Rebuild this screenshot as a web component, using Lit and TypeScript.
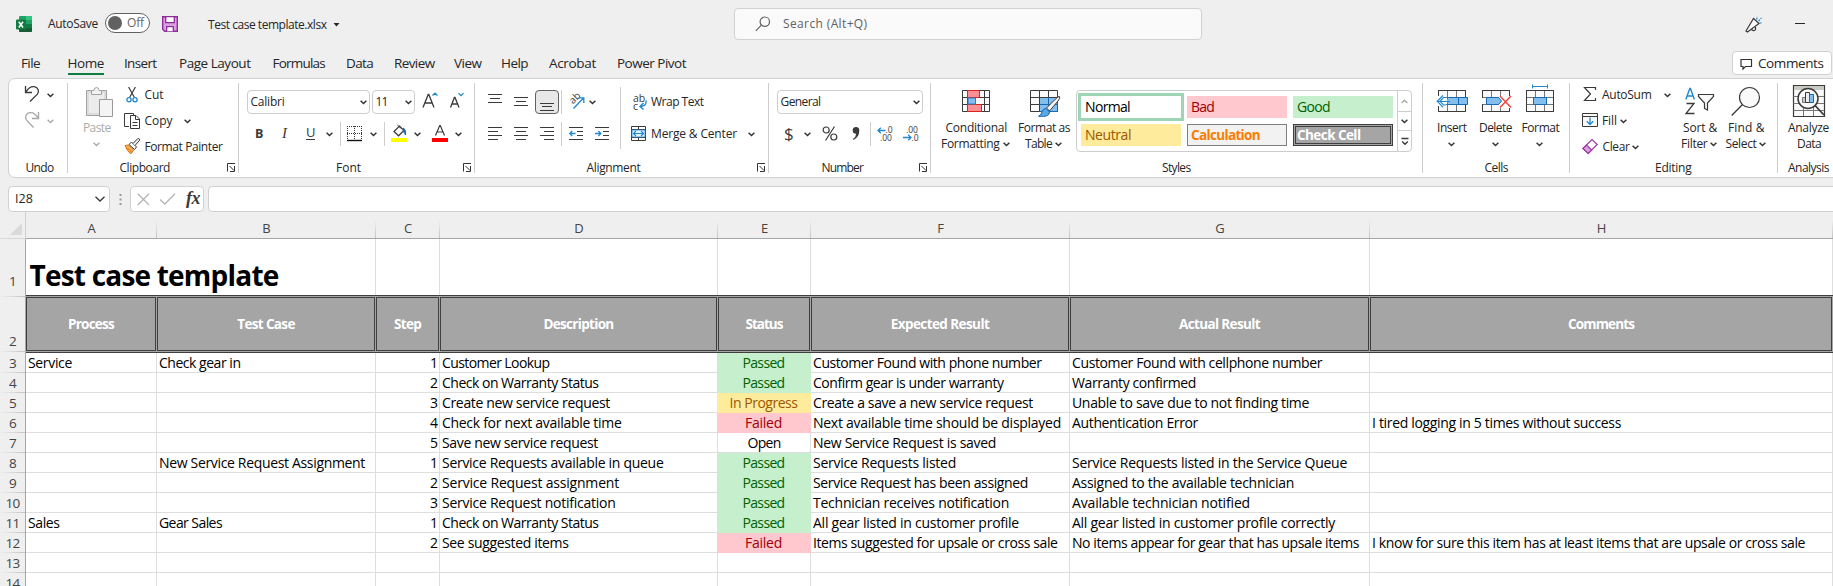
import { LitElement, html, css, svg, TemplateResult, SVGTemplateResult } from "lit";
import { customElement, property } from "lit/decorators.js";
import { classMap } from "lit/directives/class-map.js";
import { styleMap } from "lit/directives/style-map.js";

/** A single line of text tracked so that it fills a given width. */
@customElement("fit-text")
class FitText extends LitElement {
  @property() text = "";
  @property({ type: Number }) w = 0;
  static styles = css`
    :host { display: inline-block; white-space: pre; flex: none; }
    span { display: inline-block; }
  `;
  render() {
    return html`<span>${this.text}</span>`;
  }
  updated() {
    const s = this.renderRoot.querySelector("span") as HTMLElement;
    s.style.letterSpacing = "0";
    const natural = s.getBoundingClientRect().width;
    s.style.letterSpacing = (this.w - natural) / this.text.length + "px";
    this.style.width = this.w + "px";
  }
}

const t = (text: string, w: number, cls = "") =>
  html`<fit-text class=${cls} .text=${text} .w=${w}></fit-text>`;

const ic = (w: number, h: number, body: SVGTemplateResult | SVGTemplateResult[]) =>
  html`<svg class="ic" width=${w} height=${h} viewBox="0 0 ${w} ${h}" fill="none" stroke="#3b3a39">${body}</svg>`;

type Item = [number, TemplateResult];

/** A row of items, each starting at a distance from the row's left edge. */
const strip = (x0: number, cls: string, items: Item[]) =>
  html`<div class="strip ${cls}">
    ${items.map(
      ([x, tpl]) =>
        html`<div class="slot"><div class="slot-in" style=${styleMap({ marginLeft: x - x0 + "px" })}>${tpl}</div></div>`
    )}
  </div>`;

const chev = (c = "#333") =>
  html`<svg class="ic" width="7" height="5" viewBox="0 0 7 5" fill="none" stroke=${c} stroke-width="1.5"><path d="M.6 .8L3.5 3.5L6.4 .8"/></svg>`;
const launcher = () =>
  ic(9, 9, svg`<path d="M.5 8.5V.5H8M7.5 3V8.5H3M2.5 3L7 7.5" stroke="#333"/>`);
const vsep = (h: number) => html`<div class=${h > 30 ? "vsep tall" : "vsep"}></div>`;

/* horizontal rules of a paragraph glyph: [x1, x2, y] */
const rules = (w: number, h: number, ls: number[][]) =>
  ic(w, h, ls.map(([a, b, y]) => svg`<path d="M${a} ${y + 0.5}H${b}"/>`));

const undo = ic(17, 26, svg`<path d="M1.5 4V10.5H8" stroke-width="1.3"/><path d="M1.8 10.2C4 6.5 7 4.3 10.2 4.7C14 5.3 15.6 9 13.4 12.2L6 19.5" stroke-width="1.3"/>`);
const redo = ic(17, 26, svg`<g stroke="#a6a6a6" stroke-width="1.3"><path d="M14.5 4V10.5H8"/><path d="M14.2 10.2C12 6.5 9 4.3 5.8 4.7C2 5.3 .4 9 2.6 12.2L9.5 19.5"/></g>`);

const paste = ic(28, 38, svg`<g stroke="#a3a3a3"><path d="M.5 8.5H20.5V33.5H.5Z" fill="#dcdcdc"/><path d="M3 11H18V31H3Z" fill="#ececec" stroke="none"/><path d="M5.5 12.5V8.5H8Q8 5.5 10.5 5.5T13 8.5H15.5V12.5Z" fill="#f2f2f2"/><path d="M13.5 17.5H26.5V34.5H13.5Z" fill="#f4f4f4" stroke="#999"/></g>`);
const cut = ic(12, 26, svg`<path d="M2.6 5L8.3 15.3M9.4 5L3.7 15.3" stroke-width="1.2"/><circle cx="3" cy="17.8" r="2.1" stroke="#1e88d2" stroke-width="1.3"/><circle cx="9" cy="17.8" r="2.1" stroke="#1e88d2" stroke-width="1.3"/>`);
const copy = ic(17, 26, svg`<path d="M5 18.5H.5V5.5H9.5V7" /><path d="M6.5 7.5H12L15.5 11V20.5H6.5Z" fill="#fff"/><path d="M11.5 7.5V11.5H15.5M8.5 14.5H13.5M8.5 17.5H13.5"/>`);
const painter = ic(17, 26, svg`<path d="M1 11.5L4.5 11L9.5 16L6.8 20Q3 17 1 11.5Z" fill="#f7b15c" stroke="#d9730d"/><path d="M3 13.5L8 18.5" stroke="#d9730d"/><path d="M5 10.5L7.5 8L12.5 13L10.5 15.5Z" fill="#fff"/><path d="M9 9.5L13.5 4.8Q15 4 15.6 5.2Q16 6 15 7L11 11.5" fill="#eee"/>`);

const fontBig = ic(17, 32, svg`<path d="M1 21.5L6.2 8.5H6.8L12 21.5M3 17H10" stroke-width="1.3"/><path d="M10.5 9.5L13 7.2L15.5 9.5" stroke="#1e88d2" stroke-width="1.3"/>`);
const fontSmall = ic(15, 32, svg`<path d="M.5 21.5L4.4 11.5H5L9 21.5M2 18H7.5" stroke-width="1.3"/><path d="M8.5 7.3L11 9.7L13.5 7.3" stroke="#1e88d2" stroke-width="1.3"/>`);
const borders = ic(16, 32, svg`<path d="M0 8.5H15M0 15.5H15M.5 8V22M7.5 8V22M14.5 8V22" stroke-dasharray="1 1"/><path d="M0 22.5H15" stroke="#111" stroke-width="1.4"/>`);
const bucket = ic(17, 32, svg`<path d="M3 13.5L8.5 8L13 12.5L7.5 17.8Z" fill="#fafafa" stroke-width="1.2"/><path d="M6.3 6.8L10 10.5"/><path d="M12 10Q15 11 14.6 17Q13 13.5 11.8 13" fill="#1769b5" stroke="#1769b5"/><path d="M0 20H16V24H0Z" fill="#ff0" stroke="none"/>`);
const fontColor = ic(17, 32, svg`<path d="M3.5 17.5L7.7 7.5H8.3L12.5 17.5M5.2 14H10.8" stroke-width="1.2"/><path d="M0 20H16V24H0Z" fill="#f00" stroke="none"/>`);
const boldG = ic(9, 32, svg`<text x="0" y="20" class="g gb">B</text>`);
const italicG = ic(10, 32, svg`<text x="1" y="20" class="g gi">I</text>`);
const underG = ic(11, 32, svg`<text x="0" y="19" class="g">U</text><path d="M0 21.5H9"/>`);

const orient = ic(18, 32, svg`<text x="0" y="0" transform="translate(5 18.5) rotate(-45)" class="g gab">ab</text><path d="M5.5 22.5L15.5 12M10.5 11.8H15.8V17" stroke="#1e88d2" stroke-width="1.3"/>`);
const wrap = ic(16, 32, svg`<text x="0" y="15.5" class="g gw">ab</text><text x="0" y="24" class="g gw">c</text><path d="M13 14.5Q14 20 7.5 20.5M10.5 17L7 20.5L10.5 23.5" stroke="#1e88d2" stroke-width="1.4"/>`);
const merge = ic(16, 32, svg`<path d="M.5 8.5H14.5V22.5H.5ZM.5 11.5H14.5M.5 19.5H14.5M7.5 8.5V11.5M7.5 19.5V22.5"/><path d="M1 12H14V19H1Z" fill="#e8f4fc" stroke="#1e88d2" stroke-width=".8"/><path d="M2.5 15.5H12.5M5 13L2.5 15.5L5 18M10 13L12.5 15.5L10 18" stroke="#1e88d2" stroke-width="1.2"/>`);
const dent = (dir: number) =>
  ic(16, 32, svg`<path d="M0 9.5H14M8 13.5H14M8 17.5H14M0 21.5H14"/><path d=${dir < 0 ? "M6.5 15.5H.8M3.2 13L.8 15.5L3.2 18" : "M0 15.5H5.8M3.4 13L5.8 15.5L3.4 18"} stroke="#1e88d2" stroke-width="1.3"/>`);

const dollar = ic(11, 32, svg`<text x="0" y="21.5" class="g gx">$</text>`);
const percent = ic(17, 32, svg`<circle cx="4.2" cy="12" r="3" stroke-width="1.2"/><circle cx="11.8" cy="19" r="3" stroke-width="1.2"/><path d="M12.5 8.5L3.5 22.5" stroke-width="1.2"/>`);
const comma = ic(9, 32, svg`<path d="M4 9A3.4 3.4 0 0 1 7.3 12.5Q7.3 19 1.5 22L1 21Q4 19 4.2 15.8A3.3 3.3 0 0 1 4 9Z" fill="#3b3a39" stroke="none"/>`);
const decInc = ic(17, 32, svg`<text x="8.5" y="14.5" class="g gd">.0</text><text x="3" y="23" class="g gd">.00</text><path d="M8.5 12.5H1M3.8 9.7L1 12.5L3.8 15.3" stroke="#1e88d2" stroke-width="1.3"/>`);
const decDec = ic(17, 32, svg`<text x="3" y="14.5" class="g gd">.00</text><text x="8.5" y="23" class="g gd">.0</text><path d="M0 19.5H8M5.2 16.7L8 19.5L5.2 22.3" stroke="#1e88d2" stroke-width="1.3"/>`);

const condFmt = ic(29, 38, svg`<path d="M.5 8.5H27.5V29.5H.5Z" fill="#fafafa"/><path d="M.5 15.5H27.5M.5 22.5H27.5M5.5 8.5V29.5M22.5 8.5V29.5" /><path d="M5.5 8.5H17.5V15.5H5.5ZM5.5 22.5H19.5V29.5H5.5Z" fill="#ff8f94" stroke="#d8261c"/><path d="M6 16H13.5V22H6Z" fill="#83beec" stroke="#2b7cd3"/>`);
const fmtTable = ic(31, 38, svg`<path d="M.5 8.5H27.5V29.5H.5Z" fill="#fafafa"/><path d="M9.5 15.5H27.5V29.5H9.5Z" fill="#83beec" stroke="#1769b5"/><path d="M.5 15.5H27.5M.5 22.5H9.5M9.5 8.5V29.5M18.5 8.5V15.5"/><path d="M9.5 22.5H27.5M18.5 15.5V29.5" stroke="#1769b5"/><path d="M29.5 14.5Q30.5 16 28 19L19.5 29L16.5 26L25.5 17Q28.5 14 29.5 14.5Z" fill="#f2f2f2"/><path d="M16 26.5L19.5 30Q19 34.5 13.5 34.3H8.5Q11.5 33 12 29.8Q13 26.5 16 26.5Z" fill="#5aa9e6" stroke="#1769b5"/>`);
const gridBase = svg`<path d="M2.5 8.5H29.5V29.5H2.5Z" fill="#fafafa"/><path d="M2.5 15.5H29.5M2.5 22.5H29.5M11.5 8.5V29.5M20.5 8.5V29.5" stroke="#777"/><path d="M2.5 8.5H29.5V29.5H2.5Z"/>`;
const insertIc = ic(33, 38, svg`${gridBase}<path d="M0 14H10V24H0Z" fill="#fff" stroke="none"/><path d="M13 15.5H31.5V22.5H13L10.5 19Z" fill="#83beec" stroke="none"/><path d="M11 15.5H31.5V22.5H11M22.5 15.5V22.5" stroke="#1769b5"/><path d="M14 19.5H1.5M7 13.5L1.2 19.3L7 25.2M10 15.5H7.5L4 19.3L7.5 23H10" stroke="#1e88d2" stroke-width="1.2"/>`);
const deleteIc = ic(33, 38, svg`${gridBase}<path d="M1 16H5V22H1ZM19 14H31V26H19Z" fill="#fff" stroke="none"/><path d="M6.5 15.5H18.5L21.5 19L18.5 22.5H6.5Z" fill="#83beec" stroke="#1769b5"/><path d="M20 14L31 25.5M31 14L20 25.5" stroke="#f0413c" stroke-width="1.4"/>`);
const formatIc = ic(33, 38, svg`${gridBase}<path d="M9.5 15.5H22.5V22.5H9.5Z" fill="#83beec" stroke="#1769b5"/><path d="M8.5 4.5H23.5M8.5 2.5V6.5M23.5 2.5V6.5" stroke="#1e88d2"/>`);

const sigma = ic(14, 26, svg`<path d="M12.5 8V5.5H1.5L7.5 12L1.5 18.5H12.5V16" stroke-width="1.2"/>`);
const fill = ic(17, 26, svg`<path d="M.5 5.5H15.5V18.5H.5Z" fill="#fafafa"/><path d="M.5 8.5H15.5"/><path d="M8 9.5V16.5M4.8 13.3L8 16.5L11.2 13.3" stroke="#1e88d2" stroke-width="1.3"/>`);
const eraser = ic(17, 26, svg`<path d="M1 14.5L10 5.5L15.2 10.5L6.2 19.5Z" fill="#fff" stroke="#9b3aa6" stroke-width="1.2"/><path d="M1 14.5L4.5 11L9.7 16L6.2 19.5Z" fill="#dca0e0" stroke="#9b3aa6" stroke-width="1.2"/>`);
const sort = ic(30, 38, svg`<path d="M.8 17.5L4.8 6.5H5.4L9.4 17.5M2.3 14H7.9" stroke="#1e88d2" stroke-width="1.4"/><path d="M1.5 21.5H9L1 31.5H9.5" stroke-width="1.3"/><path d="M13.5 12.5H28.5V14.5L22.5 21V28L19.5 26.5V21L13.5 14.5Z" fill="#fafafa" stroke-width="1.2"/>`);
const find = ic(30, 38, svg`<circle cx="18.5" cy="15.5" r="10" fill="#fafafa" stroke-width="1.2"/><path d="M11.5 22.5L.7 33.5" stroke-width="1.3"/>`);
const analyze = ic(33, 38, svg`<path d="M.5 3.5H31.5V34.5H.5Z" fill="#fafafa" stroke-width="1.2"/><path d="M1 4H31V8H1Z" fill="#c9c9c4" stroke="none"/><path d="M.5 14.5H31M.5 21.5H31M.5 28.5H31M10.5 25V34M20.5 25V34" stroke="#777"/><circle cx="15" cy="16.5" r="10" fill="#fafafa" stroke-width="1.5"/><path d="M9.5 15.5H12.5V20.5H9.5Z" fill="#ccc" stroke="#777"/><path d="M12.5 10.5H16.5V20.5H12.5Z" fill="#eee"/><path d="M16.5 12.5H20.5V20.5H16.5Z" fill="#83beec" stroke="#1769b5"/><path d="M22 23.5L31 33" stroke-width="1.8"/>`);

interface Row { c: [string, number][]; }
const COLS = ["A", "B", "C", "D", "E", "F", "G", "H"];
const HEADS: [string, number][] = [
  ["Process", 46], ["Test Case", 57.5], ["Step", 27], ["Description", 70], ["Status", 37],
  ["Expected Result", 98.5], ["Actual Result", 81], ["Comments", 66],
];
const E: [string, number] = ["", 0];
const P: [string, number] = ["Passed", 42];
const F: [string, number] = ["Failed", 37];
const n = (s: string): [string, number] => [s, 7];
const ROWS: Row[] = [
  { c: [["Service", 44], ["Check gear in", 81.5], n("1"), ["Customer Lookup", 107.5], P, ["Customer Found with phone number", 228.5], ["Customer Found with cellphone number", 250], E] },
  { c: [E, E, n("2"), ["Check on Warranty Status", 156.5], P, ["Confirm gear is under warranty", 190.5], ["Warranty confirmed", 124], E] },
  { c: [E, E, n("3"), ["Create new service request", 168], ["In Progress", 68], ["Create a save a new service request", 220], ["Unable to save due to not finding time", 237], E] },
  { c: [E, E, n("4"), ["Check for next available time", 179.5], F, ["Next available time should be displayed", 248], ["Authentication Error", 126], ["I tired logging in 5 times without success", 249]] },
  { c: [E, E, n("5"), ["Save new service request", 156], ["Open", 33], ["New Service Request is saved", 183], E, E] },
  { c: [E, ["New Service Request Assignment", 206], n("1"), ["Service Requests available in queue", 221.5], P, ["Service Requests listed", 143], ["Service Requests listed in the Service Queue", 275], E] },
  { c: [E, E, n("2"), ["Service Request assignment", 177], P, ["Service Request has been assigned", 215], ["Assigned to the available technician", 222], E] },
  { c: [E, E, n("3"), ["Service Request notification", 173.5], P, ["Technician receives notification", 196], ["Available technician notified", 178], E] },
  { c: [["Sales", 31.5], ["Gear Sales", 63], n("1"), ["Check on Warranty Status", 156.5], P, ["All gear listed in customer profile", 206], ["All gear listed in customer profile correctly", 263], E] },
  { c: [E, E, n("2"), ["See suggested items", 126.5], F, ["Items suggested for upsale or cross sale", 244.5], ["No items appear for gear that has upsale items", 287], ["I know for sure this item has at least items that are upsale or cross sale", 433]] },
  { c: [E, E, E, E, E, E, E, E] },
  { c: [E, E, E, E, E, E, E, E] },
];
const TABS: [number, string, number][] = [
  [21, "File", 19], [67.5, "Home", 36.5], [124, "Insert", 32.5], [179, "Page Layout", 71.5], [272.5, "Formulas", 52.5],
  [346, "Data", 27], [394, "Review", 40.5], [454, "View", 27.5], [501, "Help", 27], [549, "Acrobat", 47], [617, "Power Pivot", 69],
];

@customElement("app-root")
class AppRoot extends LitElement {
  static styles = css`
    :host { display: block; width: 1833px; height: 586px; overflow: hidden; background: #efefef;
      font: 12px/16px "Open Sans", "Noto Sans", sans-serif; color: #262626; }
    * { box-sizing: border-box; }
    .ic { display: block; flex: none; overflow: visible; }
    .g { font: 13px "Open Sans", sans-serif; fill: #3b3a39; stroke: none; }
    .gb { font-weight: 700; font-size: 12.5px; }
    .gi { font: italic 15px "Liberation Serif", serif; }
    .gab { font-size: 10px; }
    .gw { font-size: 10.5px; }
    .gx { font-size: 17px; }
    .gd { font-size: 8.5px; }

    /* the slots share one grid cell; each one's content starts at its own margin */
    .strip { display: grid; align-items: center; justify-items: start; grid-template: 100% / 100%; }
    .slot { grid-area: 1 / 1; display: flex; align-items: center; }
    .slot-in { display: flex; align-items: center; }

    .titlebar { height: 46px; padding-top: 0; }
    .titlebar .strip { height: 41px; }
    .toggle { display: flex; align-items: center; gap: 5px; width: 45px; height: 20px; margin-top: 5px; border: 1.5px solid #616161; border-radius: 10px; background: #fff; padding-left: 2px; color: #666; }
    .knob { width: 14px; height: 14px; border-radius: 50%; background: #616161; }
    .t5 { margin-top: 6px; }
    .t6 { margin-top: 7px; }
    .t8 { margin-top: 9px; }
    .search { display: flex; align-items: center; gap: 12px; width: 468px; height: 32px; margin-top: 7px; padding-left: 20px; background: #fafafa; border: 1px solid #d1d1d1; border-radius: 4px; color: #616161; }

    .tabs { height: 32px; }
    .tabs .strip { height: 32px; font-size: 13.5px; }
    .tab { display: flex; height: 25px; padding-top: 3px; flex-direction: column; border-bottom: 2px solid transparent; margin-top: 1px; line-height: 20px; }
    .tab.on { border-color: #107c41; }
    .comments { display: flex; align-items: center; gap: 5px; width: 100px; height: 24px; margin-top: 2px; padding-left: 7px; background: #fff; border: 1px solid #d1d1d1; border-radius: 4px; }

    .ribbon { display: flex; height: 100px; width: 1850px; margin-left: 8px; background: #fff; border: 1px solid #d1d1d1; border-radius: 7px; }
    .group { padding-top: 3px; flex: none; }
    .body { height: 78px; overflow: visible; }
    .body.two { padding-top: 4px; }
    .div { width: 1px; height: 90px; margin-top: 4px; background: #cdcdcd; flex: none; }
    .r26 { height: 26px; }
    .r32 { height: 32px; }
    .r38 { height: 38px; }
    .r16 { height: 16px; }
    .r15 { height: 15px; }
    .over { display: grid; }
    .over > * { grid-area: 1 / 1; }
    .dim { color: #ababab; }
    .combo { display: flex; align-items: center; justify-content: space-between; height: 24px; margin-bottom: 0; padding: 0 2px 0 2.5px; border: 1px solid #cdcdcd; border-radius: 4px; background: #fff; }
    .w122 { width: 123px; }
    .w42 { width: 43px; }
    .w146 { width: 146px; }
    .vsep { width: 1px; height: 24px; background: #cdcdcd; }
    .vsep.tall { height: 62px; }
    .pressed { width: 24px; height: 24px; border: 1px solid #616161; border-radius: 4px; background: #e8e8e8; display: flex; align-items: center; justify-content: center; }

    .gallery { display: flex; width: 336px; height: 62px; margin-top: 8px; border: 1px solid #cdcdcd; border-radius: 4px; font-size: 14px; line-height: 18px; }
    .swatches { display: grid; grid-template-columns: 100px 100px 100px; grid-auto-rows: 22px; column-gap: 6px; row-gap: 6px; padding: 5px 0 0 4px; width: 320px; }
    .sw { display: flex; align-items: center; padding-left: 4px; padding-bottom: 1px; }
    .normal { outline: 3px solid #9fd5b7; color: #000; }
    .bad { background: #ffc7ce; color: #9c0006; }
    .good { background: #c6efce; color: #006100; }
    .neutral { background: #ffeb9c; color: #9c5700; }
    .calc { background: #f2f2f2; color: #fa7d00; border: 1px solid #7f7f7f; font-weight: 700; padding-left: 3px; font-size: 13.5px; }
    .check { background: #a5a5a5; color: #fff; border: 3px double #3f3f3f; font-weight: 700; padding-left: 1px; font-size: 13.5px; }
    .scroll { flex: 1; display: grid; grid-template-rows: 20px 19px 1fr; border-left: 1px solid #cdcdcd; }
    .scroll > div { display: flex; align-items: center; justify-content: center; }
    .scroll > div + div { border-top: 1px solid #cdcdcd; }

    .fbar { display: flex; height: 26px; margin: 8px 0 0 8px; }
    .box { display: flex; align-items: center; height: 26px; background: #fff; border: 1px solid #d1d1d1; border-radius: 4px; flex: none; }
    .name { width: 102px; justify-content: space-between; padding: 0 4px 0 6px; font-size: 12.5px; }
    .dots { width: 20px; flex: none; display: flex; justify-content: center; align-items: center; }
    .fx { width: 74px; padding-left: 6px; gap: 9px; margin-right: 4px; }
    .fxt { font: italic 700 18px/20px "Liberation Serif", serif; color: #3b3a39; margin-left: 1px; margin-top: -3px; }
    .input { width: 1650px; }

    .cols, .row { display: grid; grid-template-columns: 131px 219px 64px 278px 93px 259px 300px 463px; }
    .sheet { display: grid; grid-template-columns: 26px 1807px; grid-template-rows: 27px auto; }
    .corner { border-bottom: 1px solid #d8d8d8; border-right: 1px solid #d0d0d0; display: flex; padding: 11px 0 0 9px; }
    .cols { border-bottom: 1px solid #a6a6a6; font-size: 13px; color: #444; }
    .col { display: flex; align-items: center; justify-content: center; padding-top: 5px; background: linear-gradient(#efefef, #c4c4c4) right 100% / 1px 18px no-repeat; }
    .nums { border-right: 1px solid #a6a6a6; font-size: 13.5px; color: #444; }
    .num { height: 20px; display: flex; justify-content: center; align-items: flex-end; line-height: 20px; background: linear-gradient(90deg, #efefef, #c4c4c4) 0 100% / 100% 1px no-repeat; }
    .n1 { height: 58px; padding-bottom: 6px; }
    .n2 { height: 55px; padding-bottom: 1px; }
    .n3 { height: 21px; }
    .cells { background: #fff; color: #000; font-size: 14px; line-height: 20px; }
    .cell { height: 20px; padding: 0 2px; border-right: 1px solid #dedede; border-bottom: 1px solid #dedede; display: flex; white-space: nowrap; }
    .cell.right { justify-content: flex-end; }
    .cell.mid { justify-content: center; }
    .cell.bad, .cell.good, .cell.neutral { margin-left: -1px; border-color: transparent; background-clip: border-box; }
    .cell.bad { border-color: #ffc7ce; }
    .cell.good { border-color: #c6efce; }
    .cell.neutral { border-color: #ffeb9c; }
    .row.first .cell { height: 56px; border-bottom: 0; }
    .row.first .cell.nb { border-right: 0; }
    .big { font-size: 28px; line-height: 38px; font-weight: 700; margin: 17px 0 0 1.5px; }
    .row.head { background: #a5a5a5; border: solid #3f3f3f; border-width: 1px 0; padding: 1px 0; }
    .hc { display: flex; align-items: center; justify-content: center; height: 54px; margin-right: 1px; border: 1px solid #3f3f3f; color: #fff; font-weight: 700; font-size: 13.5px; }
  `;

  group(x0: number, x1: number, label: [number, string, number], launch: number | null, body: TemplateResult, two = false) {
    const items: Item[] = [[label[0], t(label[1], label[2])]];
    if (launch) items.push([launch, launcher()]);
    return html`<div class="group" style=${styleMap({ width: x1 - x0 + "px" })}>
        <div class=${classMap({ body: true, two })}>${body}</div>
        ${strip(x0, "r15", items)}
      </div>
      <div class="div"></div>`;
  }

  ribbon() {
    return html`<div class="ribbon">
      ${this.group(9, 67, [25.5, "Undo", 28], null, html`
        ${strip(9, "r26", [[24, undo], [47, chev()]])}
        ${strip(9, "r26", [[24, redo], [47, chev("#aaa")]])}`)}
      ${this.group(68, 238, [119.5, "Clipboard", 50.5], 227, html`<div class="over">
        <div>
          ${strip(68, "r38", [[86, paste]])}
          ${strip(68, "r16 dim", [[83, t("Paste", 27.5)]])}
          ${strip(68, "r16", [[93, chev("#aaa")]])}
        </div>
        <div>
          ${strip(68, "r26", [[126, cut], [144.5, t("Cut", 19)]])}
          ${strip(68, "r26", [[124, copy], [144.5, t("Copy", 28)], [184, chev()]])}
          ${strip(68, "r26", [[124, painter], [144.5, t("Format Painter", 78)]])}
        </div></div>`)}
      ${this.group(239, 474, [336, "Font", 25], 463, html`
        ${strip(239, "r32", [
          [247, html`<div class="combo w122">${t("Calibri", 34)}${chev()}</div>`],
          [372, html`<div class="combo w42">${t("11", 12)}${chev()}</div>`],
          [422, fontBig], [450, fontSmall]])}
        ${strip(239, "r32", [[254.5, boldG], [280.5, italicG], [306, underG], [326, chev()], [340, vsep(24)], [347, borders],
          [370, chev()], [384, vsep(24)], [391, bucket], [414, chev()], [432, fontColor], [455, chev()]])}`, true)}
      ${this.group(475, 768, [586.5, "Alignment", 54], 757, html`<div class="over">
        <div>
          ${strip(475, "r32", [
            [488, rules(14, 32, [[0, 14, 8], [2, 12, 12], [0, 14, 16]])],
            [514, rules(14, 32, [[0, 14, 11], [2, 12, 15], [0, 14, 19]])],
            [535, html`<div class="pressed">${rules(14, 24, [[0, 14, 13], [2, 12, 16], [0, 14, 20]])}</div>`],
            [561, vsep(24)], [568, orient], [589, chev()], [633, wrap], [651, t("Wrap Text", 52.5)]])}
          ${strip(475, "r32", [
            [488, rules(14, 32, [[0, 14, 9], [0, 10, 13], [0, 14, 17], [0, 10, 21]])],
            [514, rules(14, 32, [[0, 14, 9], [2, 12, 13], [0, 14, 17], [2, 12, 21]])],
            [540, rules(14, 32, [[0, 14, 9], [4, 14, 13], [0, 14, 17], [4, 14, 21]])],
            [561, vsep(24)], [569, dent(-1)], [595, dent(1)], [631, merge], [651, t("Merge & Center", 86)], [748, chev()]])}
        </div>
        ${strip(475, "", [[620, vsep(62)]])}</div>`, true)}
      ${this.group(769, 930, [821.5, "Number", 41.5], 919, html`
        ${strip(769, "r32", [[777, html`<div class="combo w146">${t("General", 40)}${chev()}</div>`]])}
        ${strip(769, "r32", [[784, dollar], [804, chev()], [822, percent], [852, comma], [870, vsep(24)], [877, decInc], [903, decDec]])}`, true)}
      ${this.group(931, 1422, [1162, "Styles", 28.5], null, html`<div class="over">
        <div>
          ${strip(931, "r38", [[962, condFmt], [1030, fmtTable]])}
          ${strip(931, "r16", [[945.5, t("Conditional", 61.5)], [1018, t("Format as", 52)]])}
          ${strip(931, "r16", [[941, t("Formatting", 58.5)], [1003, chev()], [1025, t("Table", 27)], [1055, chev()]])}
        </div>
        ${strip(931, "", [[1076, this.gallery()]])}</div>`)}
      ${this.group(1423, 1569, [1484.5, "Cells", 23.5], null, html`
        ${strip(1423, "r38", [[1436, insertIc], [1480, deleteIc], [1524, formatIc]])}
        ${strip(1423, "r16", [[1437, t("Insert", 29.5)], [1479, t("Delete", 33)], [1521.5, t("Format", 38)]])}
        ${strip(1423, "r16", [[1448, chev()], [1492, chev()], [1536, chev()]])}`)}
      ${this.group(1570, 1777, [1655, "Editing", 36.5], null, html`<div class="over">
        <div>
          ${strip(1570, "r26", [[1583, sigma], [1602, t("AutoSum", 49.5)], [1664, chev()]])}
          ${strip(1570, "r26", [[1582, fill], [1602, t("Fill", 15)], [1620, chev()]])}
          ${strip(1570, "r26", [[1582, eraser], [1602.5, t("Clear", 27)], [1632, chev()]])}
        </div>
        <div>
          ${strip(1570, "r38", [[1685, sort], [1731, find]])}
          ${strip(1570, "r16", [[1683, t("Sort &", 34)], [1728, t("Find &", 36.5)]])}
          ${strip(1570, "r16", [[1681, t("Filter", 26.5)], [1710, chev()], [1725.5, t("Select", 31)], [1759, chev()]])}
        </div></div>`)}
      ${this.group(1778, 1856, [1788, "Analysis", 41], null, html`
        ${strip(1778, "r38", [[1793, analyze]])}
        ${strip(1778, "r16", [[1788, t("Analyze", 41)]])}
        ${strip(1778, "r16", [[1797, t("Data", 24)]])}`)}
    </div>`;
  }

  gallery() {
    return html`<div class="gallery">
      <div class="swatches">
        <div class="sw normal">${t("Normal", 45)}</div>
        <div class="sw bad">${t("Bad", 23)}</div>
        <div class="sw good">${t("Good", 33)}</div>
        <div class="sw neutral">${t("Neutral", 46)}</div>
        <div class="sw calc">${t("Calculation", 69)}</div>
        <div class="sw check">${t("Check Cell", 63.5)}</div>
      </div>
      <div class="scroll">
        <div>${ic(7, 5, svg`<path d="M.6 4L3.5 1.2L6.4 4" stroke="#aaa" stroke-width="1.4"/>`)}</div>
        <div>${chev()}</div>
        <div>${ic(8, 9, svg`<path d="M.5 1.5H7.5M1.2 4.5L4 7.2L6.8 4.5" stroke-width="1.4"/>`)}</div>
      </div>
    </div>`;
  }

  titlebar() {
    const logo = html`<svg class="ic t6" width="16" height="16" viewBox="0 0 16 16">
      <path d="M4 0H15Q16 0 16 1V15Q16 16 15 16H4Q3 16 3 15V1Q3 0 4 0Z" fill="#21a366"/><path d="M10 0H15Q16 0 16 1V4H10Z" fill="#33c481"/><path d="M3 8H10V12H3Z" fill="#185c37"/><path d="M10 8H16V12H10Z" fill="#107c41"/><path d="M3 12H16V15Q16 16 15 16H4Q3 16 3 15Z" fill="#185c37"/><rect y="3.5" width="10" height="10" rx="1" fill="#107c41"/><path d="M2.8 5.8L7 11.4M7 5.8L2.8 11.4" stroke="#fff" stroke-width="1.6"/></svg>`;
    const save = html`<svg class="ic t6" width="16" height="16" viewBox="0 0 16 16"><path d="M.7 .7H15.3V15.3H2.7L.7 13.3Z" fill="#dca0e0" stroke="#8f2c9b" stroke-width="1.4"/><path d="M3.7 .7H12.3V6.7H3.7ZM4.7 15.3V10.7H11.3V15.3" fill="#fff" stroke="#8f2c9b" stroke-width="1.3"/></svg>`;
    const mega = html`<svg class="ic t6" width="18" height="17" viewBox="0 0 18 17" fill="none" stroke="#3b3a39" stroke-width="1.2"><path d="M1 15L8.5 2.5L14 7.5L2.5 16Z" fill="#fafafa"/><path d="M6.5 13.5Q9 16 10.5 13.5V11"/><path d="M11.5 3.5L12.5 .5M13.5 5L16.5 2M14.5 7L17 7" stroke="#1e88d2" stroke-dasharray="2 1"/></svg>`;
    return html`<div class="titlebar">${strip(0, "", [
      [16, logo],
      [48, html`<div class="t5">${t("AutoSave", 50)}</div>`],
      [105, html`<div class="toggle"><div class="knob"></div>${t("Off", 17)}</div>`],
      [162, save],
      [208, html`<div class="t8">${t("Test case template.xlsx", 118.5)}</div>`],
      [333, html`<svg class="ic t8" width="7" height="4" viewBox="0 0 7 4"><path d="M.5 0H6.5L3.5 3.5Z" fill="#262626"/></svg>`],
      [734, html`<div class="search">
        <svg class="ic" width="16" height="16" viewBox="0 0 16 16" fill="none" stroke="#616161" stroke-width="1.2"><circle cx="9.8" cy="5.7" r="4.7"/><path d="M6.3 9.2L.8 14.8"/></svg>
        ${t("Search (Alt+Q)", 84.5)}</div>`],
      [1745, mega],
      [1795, html`<svg class="ic t6" width="10" height="2" viewBox="0 0 10 2"><path d="M0 .5H10" stroke="#262626"/></svg>`],
    ])}</div>`;
  }

  render() {
    return html`
      ${this.titlebar()}
      <div class="tabs">${strip(0, "", [
        ...TABS.map(([x, s, w]): Item => [x, html`<div class=${classMap({ tab: true, on: s === "Home" })}>${t(s, w)}</div>`]),
        [1732, html`<div class="comments"><svg class="ic" width="13" height="13" viewBox="0 0 13 13" fill="none" stroke="#333" stroke-width="1.2"><path d="M1 2.5H11.5V9.5H5.5L3 12V9.5H1Z"/></svg>${t("Comments", 65.5)}</div>`],
      ])}</div>
      ${this.ribbon()}
      <div class="fbar">
        <div class="box name">${t("I28", 18)}${ic(10, 6, svg`<path d="M.5 .8L5 5L9.5 .8" stroke-width="1.4"/>`)}</div>
        <div class="dots">${ic(3, 11, svg`<path d="M.5 1H2.5M.5 5.5H2.5M.5 10H2.5" stroke="#999" stroke-width="2"/>`)}</div>
        <div class="box fx">
          ${ic(13, 13, svg`<path d="M.8 .8L12 12M12 .8L.8 12" stroke="#b5b5b5" stroke-width="1.3"/>`)}
          ${ic(17, 12, svg`<path d="M1 6.5L5.8 11L16 .8" stroke="#b5b5b5" stroke-width="1.3"/>`)}
          ${t("fx", 14, "fxt")}
        </div>
        <div class="box input"></div>
      </div>
      <div class="sheet">
        <div class="corner"><svg class="ic" width="13" height="12" viewBox="0 0 13 12"><path d="M13 0V12H1Z" fill="#dadada"/></svg></div>
        <div class="cols">${COLS.map((c) => html`<div class="col">${c}</div>`)}</div>
        <div class="nums">${Array.from({ length: 14 }, (_, i) =>
          html`<div class=${classMap({ num: true, n1: i === 0, n2: i === 1, n3: i === 2 })}>${t(String(i + 1), i < 9 ? 7 : 14)}</div>`)}</div>
        <div class="cells">
          <div class="row first">${COLS.map((c, i) =>
            html`<div class=${classMap({ cell: true, nb: i === 0 })}>${i === 0 ? t("Test case template", 249, "big") : ""}</div>`)}</div>
          <div class="row head">${HEADS.map(([s, w]) => html`<div class="hc">${t(s, w)}</div>`)}</div>
          ${ROWS.map((r) => html`<div class="row">${r.c.map(([s, w], i) =>
            html`<div class=${classMap({ cell: true, right: i === 2, mid: i === 4, good: s === "Passed", bad: s === "Failed", neutral: s === "In Progress" })}>${s ? t(s, w) : ""}</div>`)}</div>`)}
        </div>
      </div>`;
  }
}
